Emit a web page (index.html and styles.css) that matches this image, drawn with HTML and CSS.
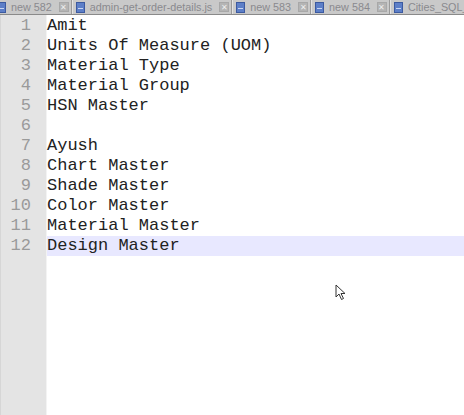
FILE: index.html
```html
<!DOCTYPE html>
<html>
<head>
<meta charset="utf-8">
<link rel="stylesheet" href="styles.css">
</head>
<body>
<div class="tabs">
  <div class="tab first"><span class="ic"></span><span class="name">new 582</span><span class="x">✕</span></div>
  <div class="tab"><span class="ic"></span><span class="name">admin-get-order-details.js</span><span class="x">✕</span></div>
  <div class="tab"><span class="ic"></span><span class="name">new 583</span><span class="x">✕</span></div>
  <div class="tab"><span class="ic"></span><span class="name">new 584</span><span class="x">✕</span></div>
  <div class="tab"><span class="ic"></span><span class="name">Cities_SQL_</span></div>
</div>
<div class="editor">
  <div class="gutter">
    <div>1</div><div>2</div><div>3</div><div>4</div><div>5</div><div>6</div>
    <div>7</div><div>8</div><div>9</div><div>10</div><div>11</div><div>12</div>
  </div>
  <div class="code">
    <div class="line">Amit</div>
    <div class="line">Units Of Measure (UOM)</div>
    <div class="line">Material Type</div>
    <div class="line">Material Group</div>
    <div class="line">HSN Master</div>
    <div class="line"></div>
    <div class="line">Ayush</div>
    <div class="line">Chart Master</div>
    <div class="line">Shade Master</div>
    <div class="line">Color Master</div>
    <div class="line">Material Master</div>
    <div class="line current">Design Master</div>
    <svg class="cursor" width="12" height="18" viewBox="0 0 12 18"><path d="M1 1 L1 13 L4 10 L6.5 15.5 L8.5 14.5 L6 9.5 L10 9.5 Z" fill="#fff" stroke="#333" stroke-width="1"/></svg>
  </div>
</div>
</body>
</html>
```
FILE: styles.css
```css
html, body { margin: 0; padding: 0; }
body { width: 464px; height: 415px; overflow: hidden; background: #fff; position: relative; }
.tabs {
  height: 14px;
  background: #c9c9c9;
  border-bottom: 1px solid #8a8a8a;
  display: flex;
  align-items: center;
  overflow: hidden;
  white-space: nowrap;
  font-family: "Liberation Sans", Arial, sans-serif;
  font-size: 10.8px;
  color: #8a8a8e;
  margin-left: -6px;
}
.tab {
  display: flex;
  align-items: center;
  height: 14px;
  padding: 0 2px 0 3px;
  border-right: 1px solid #9a9a9a;
  box-shadow: 1px 0 0 #e2e2e2;
  margin-right: 1px;
  flex-shrink: 0;
}
.ic {
  width: 9px; height: 11px;
  background: #5d7fc8;
  border: 1px solid #3c5aa0;
  box-sizing: border-box;
  margin-right: 5px;
  position: relative;
}
.ic::after { content: ""; position: absolute; left: 1px; right: 1px; top: 5px; height: 1px; background: #c9d6f2; }
.name { line-height: 14px; }
.x {
  margin-left: 7px;
  width: 10px; height: 10px;
  background: #b4b4b4; color: #eee;
  font-size: 8px; line-height: 10px; text-align: center;
  border: 1px solid #a8a8a8; box-sizing: border-box;
}
.editor { display: flex; height: 400px; }
.gutter {
  width: 46px;
  background: #e4e4e4;
  border-left: 1px solid #d6d6d6;
  box-sizing: border-box;
  padding-top: 1px;
  padding-right: 15px;
  font-family: "Liberation Mono", "Courier New", monospace;
  font-size: 17px;
  color: #9a9a9a;
  text-align: right;
}
.gutter div, .line { height: 20px; line-height: 20px; }
.code {
  flex: 1;
  padding-top: 1px;
  border-left: 1px solid #f3f3f3;
  font-family: "Liberation Mono", "Courier New", monospace;
  font-size: 17px;
  color: #222;
  position: relative;
}
.line { white-space: pre; }
.line.current { background: #e8e8ff; }
.cursor { position: absolute; left: 288px; top: 269px; }
```
